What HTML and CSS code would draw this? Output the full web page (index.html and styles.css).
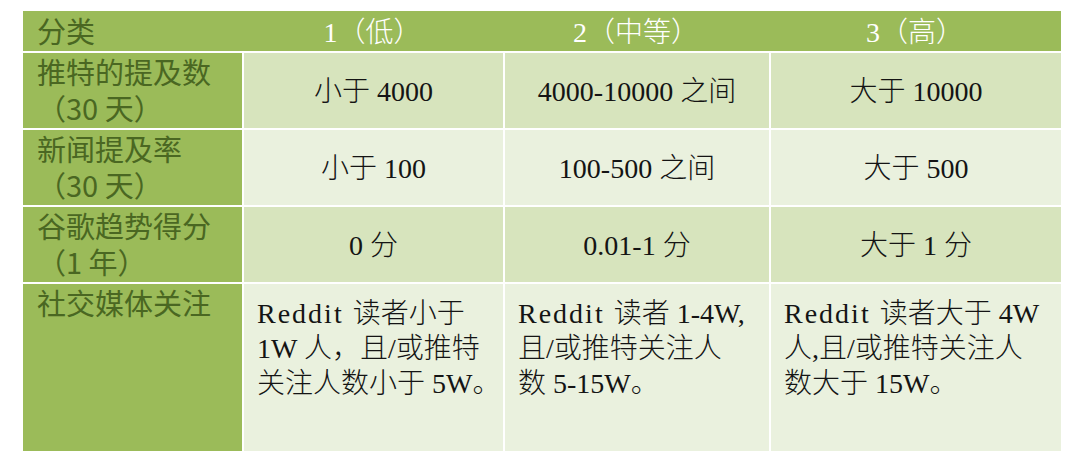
FILE: index.html
```html
<!DOCTYPE html>
<html lang="zh-CN">
<head>
<meta charset="utf-8">
<title>分类</title>
<link rel="stylesheet" href="styles.css">
</head>
<body>
<div class="table">
  <div class="head first">分类</div>
  <div class="head">1（低）</div>
  <div class="head">2（中等）</div>
  <div class="head">3（高）</div>

  <div class="label">推特的提及数<br>（30 天）</div>
  <div class="cell dark">小于 4000</div>
  <div class="cell dark">4000-10000 之间</div>
  <div class="cell dark">大于 10000</div>

  <div class="label">新闻提及率<br>（30 天）</div>
  <div class="cell light">小于 100</div>
  <div class="cell light">100-500 之间</div>
  <div class="cell light">大于 500</div>

  <div class="label">谷歌趋势得分<br>（1 年）</div>
  <div class="cell dark">0 分</div>
  <div class="cell dark">0.01-1 分</div>
  <div class="cell dark">大于 1 分</div>

  <div class="label top">社交媒体关注</div>
  <div class="cell light text"><span class="word">Reddit </span>读者小于<br>1W 人，且/或推特<br>关注人数小于 5W。</div>
  <div class="cell light text"><span class="word">Reddit </span>读者 1-4W,<br>且/或推特关注人<br>数 5-15W。</div>
  <div class="cell light text"><span class="word">Reddit </span>读者大于 4W<br>人,且/或推特关注人<br>数大于 15W。</div>
</div>
</body>
</html>
```

FILE: styles.css
```css
html, body {
  margin: 0;
  padding: 0;
  background: #ffffff;
}

.table {
  display: grid;
  grid-template-columns: 219px 261px 266px 292px;
  grid-template-rows: 40px 75px 75px 75px 167px;
  row-gap: 2px;
  width: 1038px;
  margin: 11px 0 0 23px;
}

.head {
  background: #9bbb59;
  color: #ffffff;
  display: flex;
  align-items: center;
  justify-content: center;
  padding-bottom: 3px;
  font-family: "Liberation Serif", "Noto Sans CJK SC", serif;
  font-size: 28px;
  font-weight: 300;
  white-space: nowrap;
}

.head.first {
  justify-content: flex-start;
  padding-left: 14px;
  color: #4a6722;
  font-family: "Noto Sans CJK SC", sans-serif;
  font-size: 29px;
  font-weight: 400;
}

.label {
  background: #9bbb59;
  color: #4a6722;
  font-family: "Noto Sans CJK SC", sans-serif;
  font-size: 29px;
  line-height: 36px;
  padding-left: 14px;
  padding-bottom: 3px;
  display: flex;
  flex-direction: column;
  justify-content: center;
  white-space: nowrap;
}

.label.top {
  justify-content: flex-start;
  padding-top: 0;
}

.cell {
  border-left: 2px solid #ffffff;
  display: flex;
  align-items: center;
  justify-content: center;
  padding-bottom: 3px;
  font-family: "Liberation Serif", "Noto Sans CJK SC", serif;
  font-size: 28px;
  font-weight: 300;
  color: #141414;
  white-space: nowrap;
}

.dark {
  background: #d7e4bd;
}

.light {
  background: #eaf1de;
}

.cell.text {
  display: block;
  padding: 12px 0 0 13px;
  line-height: 35px;
}

.word {
  letter-spacing: 2px;
}
```
